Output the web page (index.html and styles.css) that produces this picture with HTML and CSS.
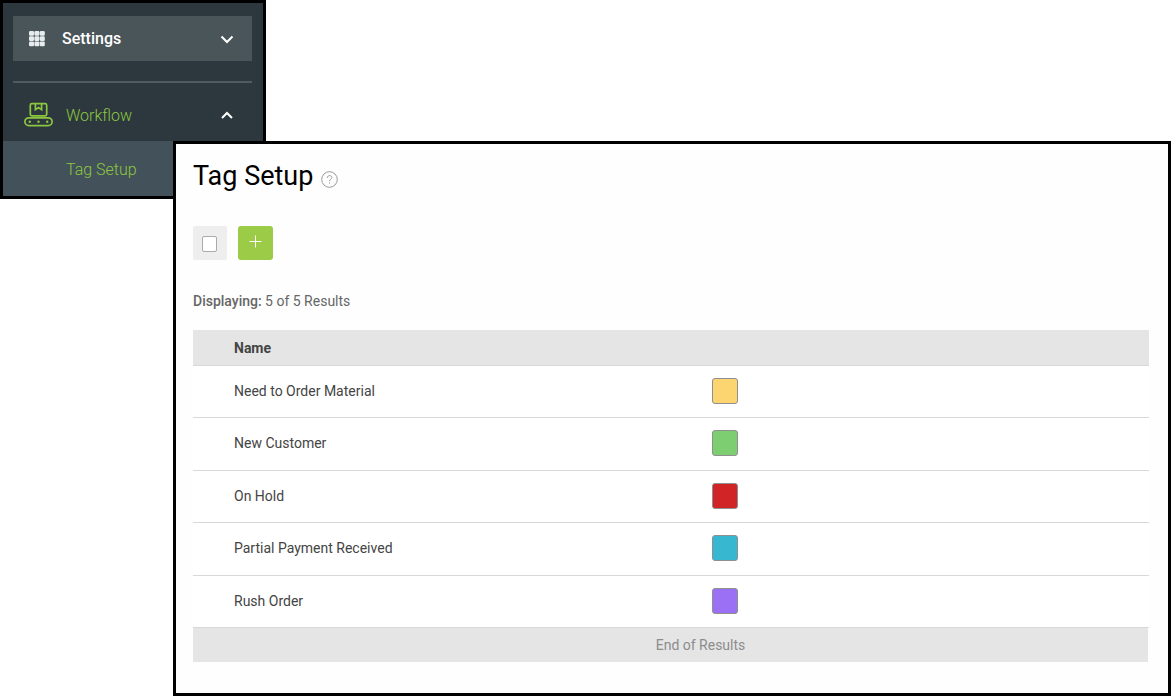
FILE: index.html
```html
<!DOCTYPE html>
<html lang="en">
<head>
  <meta charset="UTF-8" />
  <meta name="viewport" content="width=device-width, initial-scale=1.0" />
  <title>Tag Setup</title>
  <link rel="stylesheet" href="styles.css">
</head>
<body>

  <nav class="sidebar">
    <button type="button" class="menu-button">
      <svg class="grid-icon" width="16" height="16" viewBox="0 0 16 16" fill="#e6ebee">
        <rect x="0" y="0" width="5" height="4.8" rx="1.2" />
        <rect x="5.4" y="0" width="5" height="4.8" rx="1.2" />
        <rect x="10.8" y="0" width="5" height="4.8" rx="1.2" />
        <rect x="0" y="5.2" width="5" height="4.8" rx="1.2" />
        <rect x="5.4" y="5.2" width="5" height="4.8" rx="1.2" />
        <rect x="10.8" y="5.2" width="5" height="4.8" rx="1.2" />
        <rect x="0" y="10.4" width="5" height="4.8" rx="1.2" />
        <rect x="5.4" y="10.4" width="5" height="4.8" rx="1.2" />
        <rect x="10.8" y="10.4" width="5" height="4.8" rx="1.2" />
      </svg>
      <span class="menu-label">Settings</span>
      <svg class="chevron" width="14" height="10" viewBox="0 0 14 10" fill="none" stroke="#fff" stroke-width="2">
        <path d="M1.5 2.5 L7 8 L12.5 2.5" />
      </svg>
    </button>

    <hr class="divider" />

    <button type="button" class="section-button" aria-expanded="true">
      <svg class="workflow-icon" width="30" height="26" viewBox="0 0 30 26" fill="none" stroke="#8cc63f" stroke-width="1.7">
        <rect x="7.3" y="1.6" width="16.4" height="12.2" rx="1.6" />
        <path d="M12.4 2 V7.6 L15.5 5.6 L18.6 7.6 V2" />
        <rect x="1.9" y="15.8" width="27.2" height="7.8" rx="3.9" />
        <g fill="#8cc63f" stroke="none">
          <circle cx="6.8" cy="19.7" r="1.2" />
          <circle cx="15.5" cy="19.7" r="1.2" />
          <circle cx="24.2" cy="19.7" r="1.2" />
        </g>
      </svg>
      <span class="section-label">Workflow</span>
      <svg class="chevron" width="14" height="10" viewBox="0 0 14 10" fill="none" stroke="#fff" stroke-width="2">
        <path d="M2 8 L7 3 L12 8" />
      </svg>
    </button>

    <a class="submenu-link" href="#tag-setup">Tag Setup</a>
  </nav>

  <main class="panel" id="tag-setup">
    <div class="title-row">
      <h1>Tag Setup</h1>
      <button type="button" class="help-button" aria-label="Help">
        <svg width="17" height="17" viewBox="0 0 17 17" fill="none" stroke="#999">
          <circle cx="8.5" cy="8.5" r="7.8" />
          <path d="M6.3 6.8 C6.3 3.9 10.8 3.9 10.8 6.5 C10.8 8.2 8.5 8.2 8.5 10.2" />
          <path d="M8.5 11.4 V12.6" />
        </svg>
      </button>
    </div>

    <div class="toolbar">
      <label class="select-all">
        <input type="checkbox" aria-label="Select all" />
      </label>
      <button type="button" class="add-button" aria-label="Add tag">
        <svg width="13" height="13" viewBox="0 0 13 13" stroke="#fff">
          <path d="M6.5 0.5 V12.5 M0.5 6.5 H12.5" />
        </svg>
      </button>
    </div>

    <p class="result-count"><strong>Displaying:</strong> 5 of 5 Results</p>

    <table class="tag-table">
      <thead>
        <tr>
          <th class="name-col">Name</th>
          <th></th>
        </tr>
      </thead>
      <tbody>
        <tr>
          <td>Need to Order Material</td>
          <td><span class="swatch yellow"></span></td>
        </tr>
        <tr>
          <td>New Customer</td>
          <td><span class="swatch green"></span></td>
        </tr>
        <tr>
          <td>On Hold</td>
          <td><span class="swatch red"></span></td>
        </tr>
        <tr>
          <td>Partial Payment Received</td>
          <td><span class="swatch blue"></span></td>
        </tr>
        <tr>
          <td>Rush Order</td>
          <td><span class="swatch purple"></span></td>
        </tr>
      </tbody>
    </table>
    <div class="table-end">End of Results</div>
  </main>

</body>
</html>
```

FILE: styles.css
```css
* {
  box-sizing: border-box;
}

body {
  font-family: Roboto, Arial, sans-serif;
  font-size: 14px;
  color: #444;
  background-color: #fff;
  margin: 0;
}

button {
  font-family: inherit;
  border: none;
  cursor: pointer;
}

.sidebar {
  width: 266px;
  padding-top: 13px;
  background-color: #2d383e;
  border: 3px solid #000;
}

.menu-button {
  display: flex;
  align-items: center;
  width: 239px;
  height: 45px;
  margin-left: 10px;
  padding: 0 18px 0 16px;
  background-color: #4a5559;
  color: #fff;
}

.menu-label {
  margin-left: 17px;
  font-size: 16px;
  font-weight: 500;
}

.chevron {
  margin-left: auto;
}

.divider {
  height: 2px;
  margin: 20px 11px 6px 10px;
  border: none;
  background-color: #4f5b61;
}

.section-button {
  display: flex;
  align-items: center;
  width: 100%;
  height: 52px;
  padding: 0 29px 0 20px;
  background: none;
  color: #8cc63f;
}

.section-label {
  margin-left: 13px;
  font-size: 16px;
  font-weight: 300;
}

.submenu-link {
  display: block;
  height: 55px;
  padding: 3px 0 0 63px;
  line-height: 52px;
  background-color: #43525a;
  color: #8cc63f;
  font-size: 16px;
  font-weight: 300;
  text-decoration: none;
}

/* the panel overlaps the bottom corner of the sidebar */
.panel {
  position: relative;
  margin: -58px 0 0 173px;
  padding: 15px 19px 31px 17px;
  background-color: #fefefe;
  border: 3px solid #000;
}

.title-row {
  display: flex;
  align-items: center;
  gap: 8px;
  height: 34px;
}

.title-row h1 {
  margin: 0;
  color: #000;
  font-size: 27px;
  font-weight: 400;
}

.help-button {
  display: flex;
  padding: 6px 0 0;
  background: none;
}

.toolbar {
  display: flex;
  gap: 11px;
  margin-top: 33px;
}

.select-all {
  display: flex;
  align-items: center;
  justify-content: center;
  width: 34px;
  height: 34px;
  padding: 2px 1px 0 0;
  background-color: #eee;
  border-radius: 2px;
}

.select-all input {
  appearance: none;
  width: 15px;
  height: 16px;
  margin: 0;
  background-color: #fff;
  border: 1px solid #aaa;
  border-radius: 2px;
}

.select-all input:checked {
  background-color: #9c4;
}

.add-button {
  display: flex;
  align-items: center;
  justify-content: center;
  width: 35px;
  height: 34px;
  padding: 0 0 3px;
  background-color: #9ccb47;
  border-radius: 3px;
}

.result-count {
  margin: 31px 0 19px;
  line-height: 20px;
  color: #666;
}

.result-count strong {
  font-weight: 500;
}

.tag-table {
  width: 100%;
  table-layout: fixed;
  border-collapse: separate;
  border-spacing: 0;
}

.tag-table th,
.tag-table td {
  padding: 0;
  border-bottom: 1px solid #d8d8d8;
  text-align: left;
}

.tag-table th {
  height: 36px;
  background-color: #e5e5e5;
  font-weight: 700;
}

.tag-table td {
  height: 52px;
  padding-bottom: 2px;
  background-color: #fff;
}

.tag-table tr:nth-child(even) td {
  height: 53px;
}

.tag-table th:first-child,
.tag-table td:first-child {
  padding-left: 41px;
}

.tag-table .name-col {
  width: 54.3%;
}

.swatch {
  display: block;
  width: 26px;
  height: 26px;
  border: 1px solid #8f8f8f;
  border-radius: 3px;
}

.yellow {
  background-color: #fcd470;
}

.green {
  background-color: #7dce70;
}

.red {
  background-color: #d12427;
}

.blue {
  background-color: #38b7d0;
}

.purple {
  background-color: #9b70f5;
}

.table-end {
  margin-right: 1px;
  padding-left: 60px;
  line-height: 34px;
  background-color: #e5e5e5;
  color: #8c8c8c;
  text-align: center;
}
```
